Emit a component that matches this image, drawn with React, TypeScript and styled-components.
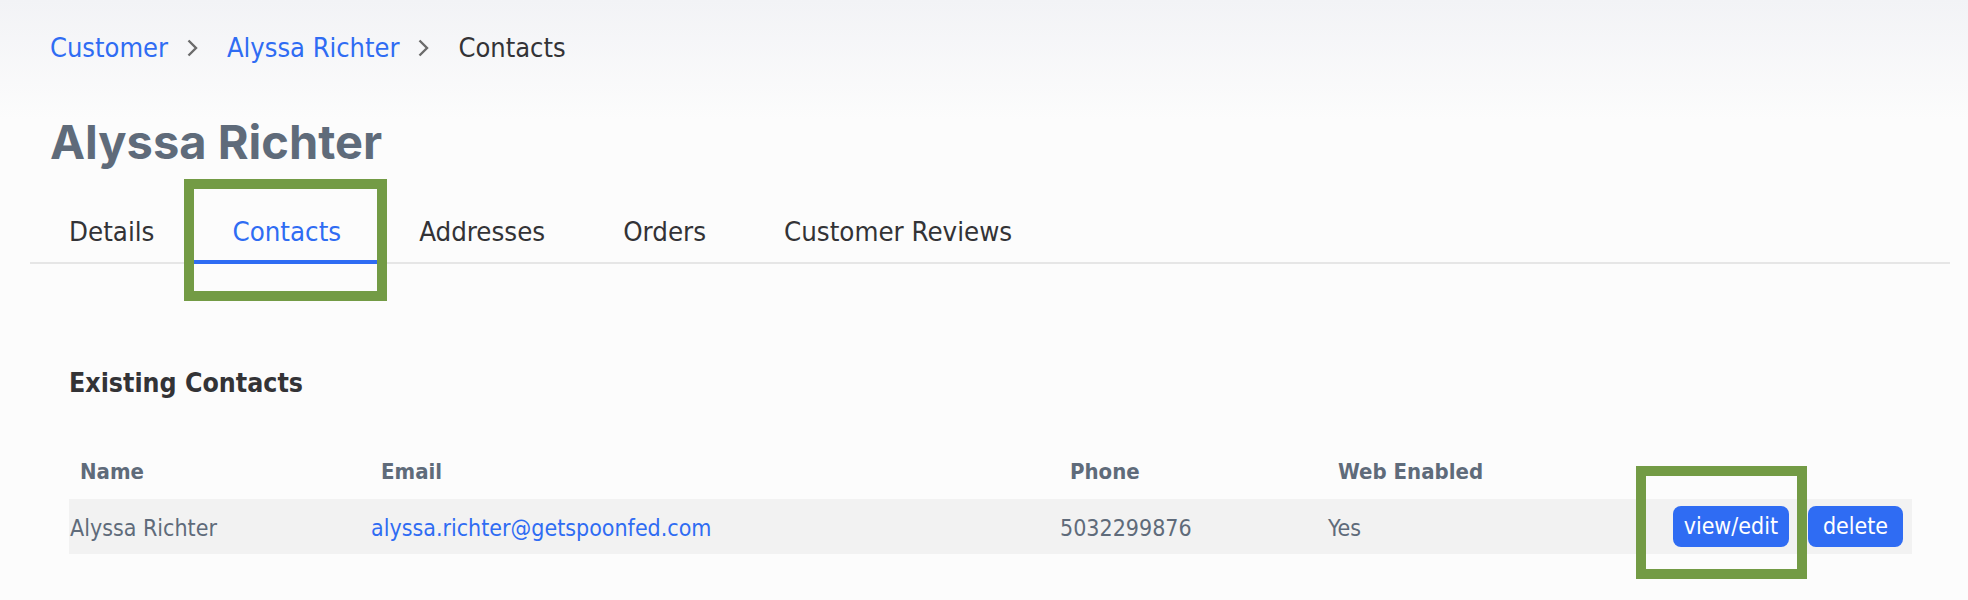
import styled, { createGlobalStyle } from "styled-components";

const c = {
  page: "#fcfcfc",
  band: "#f2f3f6",
  blue: "#2f6cf3",
  ink: "#333336",
  slate: "#5f6b7a",
  line: "#e6e6e6",
  rowBg: "#f2f2f2",
  marker: "#739b45",
};

const Global = createGlobalStyle`
  html, body {
    margin: 0;
    background: ${c.page};
  }
  body {
    font-family: "DejaVu Sans Condensed", "DejaVu Sans", sans-serif;
    font-stretch: condensed;
    background: linear-gradient(${c.band} 0, ${c.page} 120px) no-repeat ${c.page};
    min-height: 600px;
  }
`;

const Page = styled.div`
  padding: 30px 18px 40px 30px;
`;

const Crumbs = styled.nav`
  display: flex;
  align-items: center;
  padding-left: 20px;
  font-size: 27px;
  line-height: 36px;
`;

const CrumbLink = styled.a`
  color: ${c.blue};
  text-decoration: none;
`;

const CrumbCurrent = styled.span`
  color: ${c.ink};
`;

const Sep = styled.svg`
  width: 11px;
  height: 18px;
  margin: 0 29px 0 19px;
  flex: none;
`;

const Title = styled.h1`
  margin: 48px 0 0;
  padding-left: 20px;
  font-family: Inter, "Liberation Sans", sans-serif;
  font-stretch: normal;
  font-weight: 700;
  font-size: 47px;
  line-height: 56px;
  color: ${c.slate};
`;

const TabList = styled.div`
  display: flex;
  margin-top: 45px;
  border-bottom: 2px solid ${c.line};
`;

const Tab = styled.div<{ $active?: boolean }>`
  position: relative;
  padding: 0 39px 11px;
  margin-bottom: -2px;
  font-size: 27.4px;
  line-height: 34px;
  color: ${(p) => (p.$active ? c.blue : c.ink)};
  border-bottom: 4px solid ${(p) => (p.$active ? c.blue : "transparent")};
`;

const Highlight = styled.span<{ $t: number; $r: number; $b: number; $l: number }>`
  position: absolute;
  top: ${(p) => p.$t}px;
  right: ${(p) => p.$r}px;
  bottom: ${(p) => p.$b}px;
  left: ${(p) => p.$l}px;
  border: 10px solid ${c.marker};
  pointer-events: none;
  z-index: 2;
`;

const Panel = styled.section`
  padding: 103px 38px 0 39px;
`;

const SectionTitle = styled.h2`
  margin: 0;
  font-size: 26.5px;
  line-height: 32px;
  font-weight: 700;
  color: ${c.ink};
`;

const Table = styled.div`
  margin-top: 44px;
`;

const cols = "301px 689px 268px 1fr auto";

const HeadRow = styled.div`
  display: grid;
  grid-template-columns: ${cols};
  align-items: center;
  height: 56px;
`;

const HeadCell = styled.div`
  padding-left: 11px;
  font-size: 22px;
  font-weight: 700;
  color: ${c.slate};
`;

const Row = styled.div`
  display: grid;
  grid-template-columns: ${cols};
  align-items: center;
  height: 55px;
  background: ${c.rowBg};
`;

const Cell = styled.div`
  padding-left: 1px;
  padding-top: 2px;
  font-size: 23px;
  color: ${c.slate};
`;

const Mail = styled.a`
  color: ${c.blue};
  text-decoration: none;
`;

const Actions = styled.div`
  display: flex;
  justify-content: flex-end;
  gap: 19px;
  padding-right: 9px;
`;

const Btn = styled.button`
  position: relative;
  min-width: 95px;
  height: 41px;
  padding: 0 11px;
  border: 0;
  border-radius: 8px;
  background: ${c.blue};
  color: #fff;
  font-family: inherit;
  font-stretch: condensed;
  font-size: 23px;
  line-height: 41px;
`;

const Chevron = () => (
  <Sep viewBox="0 0 11 18">
    <polyline points="1.5,1.5 9,9 1.5,16.5" fill="none" stroke="#6b6b6b" strokeWidth="2.4" />
  </Sep>
);

const tabs = ["Details", "Contacts", "Addresses", "Orders", "Customer Reviews"];

const App = () => (
  <Page>
    <Global />
    <Crumbs>
      <CrumbLink href="#">Customer</CrumbLink>
      <Chevron />
      <CrumbLink href="#">Alyssa Richter</CrumbLink>
      <Chevron />
      <CrumbCurrent>Contacts</CrumbCurrent>
    </Crumbs>
    <Title>Alyssa Richter</Title>
    <TabList>
      {tabs.map((t) => (
        <Tab key={t} $active={t === "Contacts"}>
          {t}
          {t === "Contacts" && <Highlight $t={-36} $r={-7} $b={-41} $l={-9} />}
        </Tab>
      ))}
    </TabList>
    <Panel>
      <SectionTitle>Existing Contacts</SectionTitle>
      <Table>
        <HeadRow>
          <HeadCell>Name</HeadCell>
          <HeadCell>Email</HeadCell>
          <HeadCell>Phone</HeadCell>
          <HeadCell>Web Enabled</HeadCell>
          <HeadCell />
        </HeadRow>
        <Row>
          <Cell>Alyssa Richter</Cell>
          <Cell>
            <Mail href="#">alyssa.richter@getspoonfed.com</Mail>
          </Cell>
          <Cell>5032299876</Cell>
          <Cell>Yes</Cell>
          <Actions>
            <Btn>
              view/edit
              <Highlight $t={-40} $r={-18} $b={-32} $l={-37} />
            </Btn>
            <Btn>delete</Btn>
          </Actions>
        </Row>
      </Table>
    </Panel>
  </Page>
);

export default App;
